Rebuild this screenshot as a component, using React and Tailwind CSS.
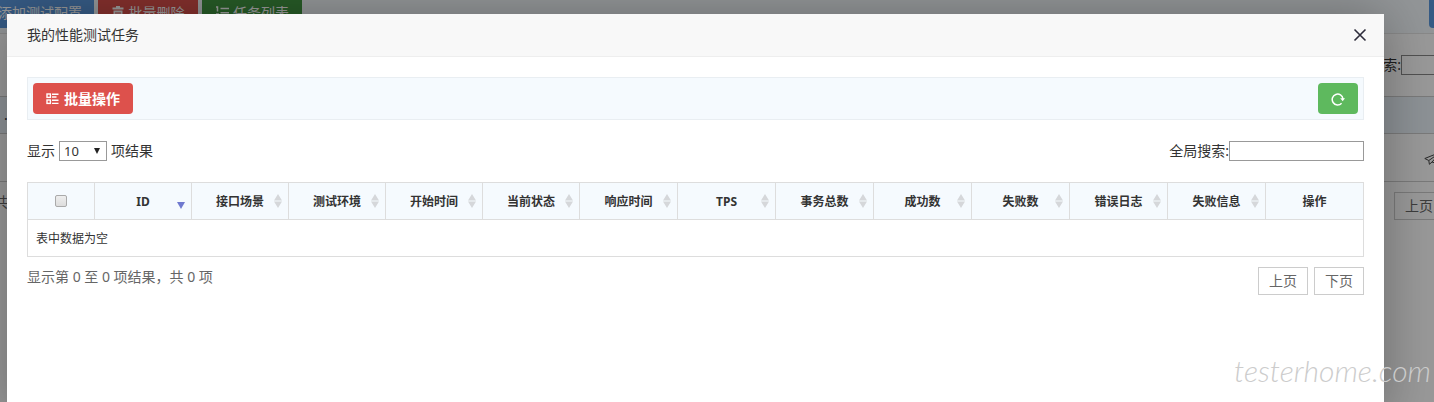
const columns = [
  { name: 'ID', className: 'w-[97px]' },
  { name: '接口场景', className: 'w-[97px]' },
  { name: '测试环境', className: 'w-[97px]' },
  { name: '开始时间', className: 'w-[97px]' },
  { name: '当前状态', className: 'w-[97px]' },
  { name: '响应时间', className: '' },
  { name: 'TPS', className: '' },
  { name: '事务总数', className: '' },
  { name: '成功数', className: '' },
  { name: '失败数', className: '' },
  { name: '错误日志', className: '' },
  { name: '失败信息', className: '' },
  { name: '操作', className: '', fixed: true },
]

function BatchIcon() {
  return (
    <svg width="13" height="12" viewBox="0 0 13 12" fill="none" stroke="currentColor" strokeWidth="1.4" aria-hidden="true">
      <rect x="1" y="1" width="3.4" height="3.4" />
      <rect x="1" y="7" width="3.4" height="3.4" />
      <path d="M6 1.2h6.5M6 4h4.5M6 7.2h6.5M6 10.4h6.5" />
    </svg>
  )
}

function TrashIcon() {
  return (
    <svg width="12" height="13" viewBox="0 0 12 13" fill="currentColor" aria-hidden="true">
      <path fillRule="evenodd" d="M4 0h4v1.6h3.5v2H.5v-2H4zM1.5 4.4h9V13h-9zM3.5 6v5.4h1V6zM5.5 6v5.4h1V6zM7.5 6v5.4h1V6z" />
    </svg>
  )
}

function ListIcon() {
  return (
    <svg width="14" height="13" viewBox="0 0 14 13" fill="none" stroke="currentColor" strokeWidth="1.5" aria-hidden="true">
      <path d="M5.5 2.5H14M5.5 6.8H14M5.5 11H14M1 1h1.5v4.5M1 8h2.2v2H1v2.3h2.5" />
    </svg>
  )
}

function RefreshIcon() {
  return (
    <svg width="14" height="14" viewBox="0 0 14 14" fill="none" aria-hidden="true">
      <path d="M10.6 11.2A5.4 5.4 0 1 1 12 7" stroke="currentColor" strokeWidth="1.5" />
      <path d="M9.2 6.2H14l-2.3 3z" fill="currentColor" />
    </svg>
  )
}

function CloseIcon() {
  return (
    <svg width="14" height="14" viewBox="0 0 14 14" stroke="currentColor" strokeWidth="1.6" aria-hidden="true">
      <path d="M1.5 1.5l11 11M12.5 1.5l-11 11" />
    </svg>
  )
}

function PlaneIcon() {
  return (
    <svg width="18" height="14" viewBox="0 0 18 14" fill="none" stroke="currentColor" strokeLinejoin="round" className="text-[#444]" aria-hidden="true">
      <path d="M17 1L.8 7.5l4 2L17 1 8 11l6 2L17 1M4.8 9.5l.6 3.8L8 11" />
    </svg>
  )
}

function SortMark({ active }) {
  if (active) {
    return (
      <svg width="8" height="16" viewBox="0 0 8 16" className="text-[#6f79cf]" aria-hidden="true">
        <path d="M0 9h8l-4 7z" fill="currentColor" />
      </svg>
    )
  }
  return (
    <svg width="8" height="16" viewBox="0 0 8 16" className="text-[#d5d7da]" aria-hidden="true">
      <path d="M0 7.4h8L4 1zM0 8.6h8L4 15z" fill="currentColor" />
    </svg>
  )
}

// page behind the dialog, scrolled so that only its edges stay visible
function TaskPage() {
  return (
    <div className="absolute inset-0 overflow-hidden bg-white" aria-hidden="true">
      <div className="-mt-2 -ml-10">
        <div className="flex items-center gap-1 border-b border-[#e5e5e5] bg-[#f5fafe] py-[5px] pl-1 text-sm text-white">
          <button tabIndex={-1} className="flex h-[31px] w-[130px] shrink-0 items-center justify-end rounded bg-[#5a98de] px-3">添加测试配置</button>
          <button tabIndex={-1} className="flex h-[31px] w-[100px] items-center justify-center gap-[5px] rounded bg-[#dd514c]"><TrashIcon />批量删除</button>
          <button tabIndex={-1} className="flex h-[31px] w-[100px] items-center justify-center gap-1 rounded bg-[#429842]"><ListIcon />任务列表</button>
          <button tabIndex={-1} className="ml-auto h-[31px] w-[5px] rounded-l bg-[#5a98de]" />
        </div>
        <div className="flex h-[62px] items-center justify-end text-sm">
          <label className="flex items-center">
            全局搜索:
            <input tabIndex={-1} className="h-5 w-[33px] border border-r-0 border-[#888]" />
          </label>
        </div>
        <div className="flex h-[38px] items-center border-y border-[#ccc] bg-[#ebf4fb] pl-11 text-sm">.</div>
        <div className="-mr-2 flex h-12 items-center justify-end border-b border-[#ccc]">
          <PlaneIcon />
        </div>
        <div className="flex items-start justify-between pt-[10px] pl-[34px] text-sm text-[#666]">
          <span>共 0 项</span>
          <button tabIndex={-1} className="h-7 w-10 border border-r-0 border-[#ccc] pl-[10px] text-left">上页</button>
        </div>
      </div>
    </div>
  )
}

export default function App() {
  return (
    <div className="relative min-h-screen overflow-hidden font-['Noto_Sans','Noto_Sans_CJK_SC',sans-serif] text-[#333]">
      <TaskPage />
      <div className="absolute inset-0 bg-black/40" />

      <section
        role="dialog"
        aria-label="我的性能测试任务"
        className="relative mt-[14px] mr-[50px] ml-[7px] min-h-screen bg-white shadow-[1px_1px_50px_rgba(0,0,0,0.3)]"
      >
        <header className="flex h-[43px] items-center justify-between border-b border-[#eee] bg-[#f8f8f8] pr-[17px] pl-5">
          <h1 className="text-sm">我的性能测试任务</h1>
          <button aria-label="关闭" className="text-[#2d2c3b]"><CloseIcon /></button>
        </header>

        <div className="p-5">
          {/* toolbar */}
          <div className="flex h-[43px] items-center justify-between border border-[#e9eef2] bg-[#f5fafe] px-[5px]">
            <button className="flex h-[31px] w-[100px] items-center justify-center gap-[5px] rounded bg-[#dd514c] text-sm font-bold text-white">
              <BatchIcon />
              批量操作
            </button>
            <button aria-label="刷新" className="flex h-[31px] w-10 items-center justify-center rounded bg-[#5eb95e] text-white">
              <RefreshIcon />
            </button>
          </div>

          {/* page length + search */}
          <div className="flex h-[62px] items-center justify-between text-sm">
            <label className="flex items-center gap-1">
              显示
              <span className="relative flex">
                <select defaultValue="10" className="h-5 w-12 appearance-none border border-[#999] bg-white pl-1 text-[13px] leading-none">
                  <option>10</option>
                  <option>25</option>
                  <option>50</option>
                </select>
                <svg width="6" height="6" viewBox="0 0 6 6" className="pointer-events-none absolute top-[7px] right-[7px]" aria-hidden="true">
                  <path d="M0 0h6L3 6z" fill="#222" />
                </svg>
              </span>
              项结果
            </label>
            <label className="flex items-center">
              全局搜索:
              <input type="text" className="h-5 w-[135px] border border-[#999] bg-white px-1" />
            </label>
          </div>

          <table className="w-full table-fixed border-collapse border border-[#ddd] text-xs">
            <thead>
              <tr className="h-[37px] bg-[#f5fafe]">
                <th className="w-[67px] border border-[#ddd]">
                  <input
                    type="checkbox"
                    aria-label="全选"
                    className="mx-auto block h-3 w-3 appearance-none rounded-xs border border-[#aaa] bg-linear-to-b from-[#eee] to-[#ddd]"
                  />
                </th>
                {columns.map((col, i) => (
                  <th key={col.name} className={`relative border border-[#ddd] pt-px font-bold ${col.className}`}>
                    {col.name}
                    {!col.fixed && (
                      <span className="absolute right-[6px] bottom-[10px]">
                        <SortMark active={i === 0} />
                      </span>
                    )}
                  </th>
                ))}
              </tr>
            </thead>
            <tbody>
              <tr className="h-[37px]">
                <td colSpan={14} className="border border-[#ddd] px-2 pt-px">表中数据为空</td>
              </tr>
            </tbody>
          </table>

          {/* pagination */}
          <div className="flex items-start justify-between pt-[10px] text-sm text-[#666]">
            <p>显示第 0 至 0 项结果，共 0 项</p>
            <div className="flex gap-[6px]">
              <button className="h-7 w-[50px] border border-[#ccc]">上页</button>
              <button className="h-7 w-[50px] border border-[#ccc]">下页</button>
            </div>
          </div>
        </div>
      </section>

      {/* watermark */}
      <p className="absolute right-[3px] bottom-7 font-['Lato',sans-serif] text-[30px] leading-9 font-light text-[#ccc] italic">testerhome.com</p>
    </div>
  )
}
